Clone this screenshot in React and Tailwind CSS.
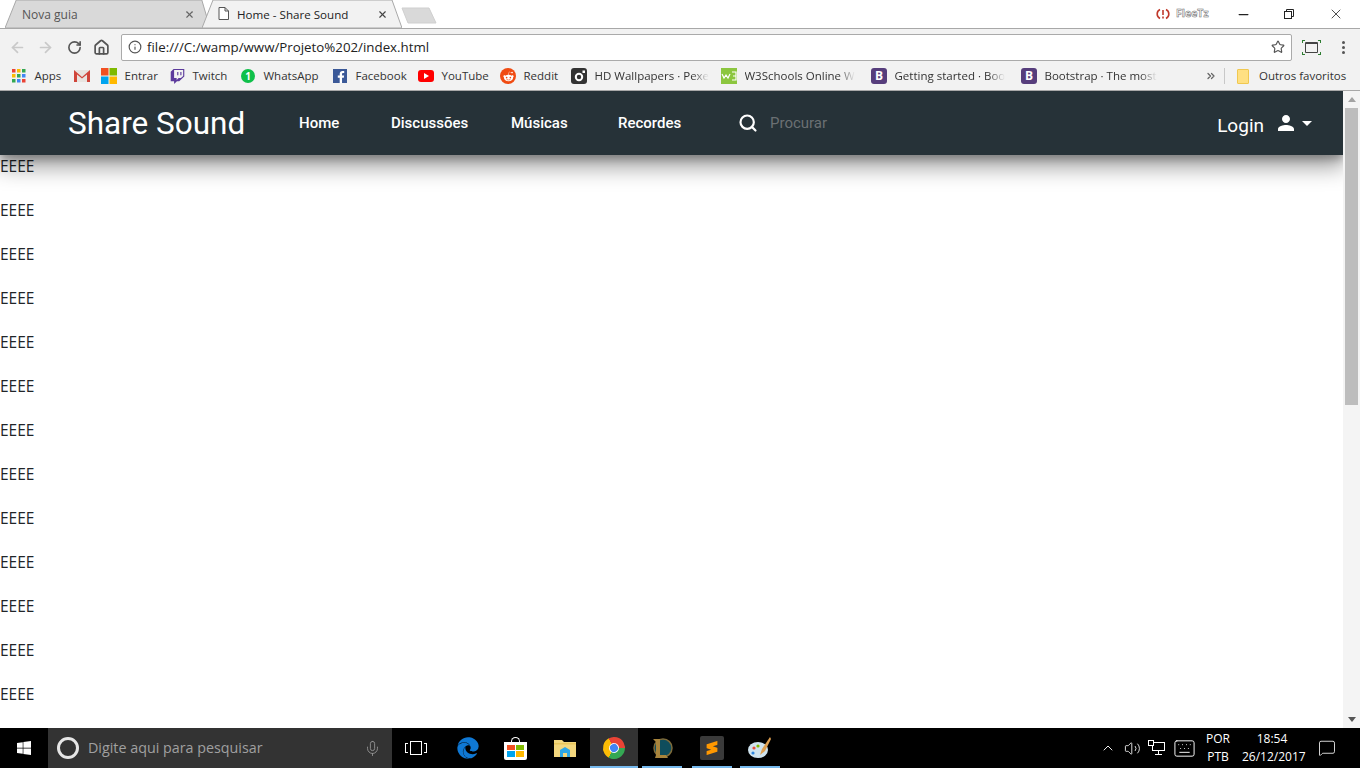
import React from "react";
import { ArrowLeft, ArrowRight, RotateCw, House, Info, Star, X, Minus, ChevronUp, Mic, Keyboard, MessageSquare, Volume2, ChevronsRight, Search } from "lucide-react";
import { FaTwitch, FaFacebookF, FaRedditAlien, FaWindows, FaEdge } from "react-icons/fa";
import { MdPerson, MdArrowDropDown } from "react-icons/md";
import { SiSublimetext } from "react-icons/si";

const chrome = { fontFamily: "'Open Sans', sans-serif" };

const Tab = ({ active, className, children }) => (
  <div className={`relative h-[29px] flex items-center ${className}`}>
    <svg className="absolute inset-0 w-full h-full" viewBox="0 0 100 29" preserveAspectRatio="none">
      <polygon
        points={active ? "0,29 5.5,1 95,1 100,29" : "0,29 5.5,1 96,1 100,29"}
        fill={active ? "#f2f2f2" : "#d9d9d9"}
        stroke="#a8a8a8"
        strokeWidth="1"
        vectorEffect="non-scaling-stroke"
      />
    </svg>
    {children}
  </div>
);

const Grid = () => (
  <svg width="14" height="14" viewBox="0 0 14 14">
    {[0, 5, 10].map((y, r) =>
      [0, 5, 10].map((x, c) => (
        <rect key={`${r}${c}`} x={x} y={y} width="3.5" height="3.5" fill={["#ea4335", "#fbbc05", "#34a853", "#4285f4"][(r + c) % 4]} />
      ))
    )}
  </svg>
);

const Gmail = () => (
  <svg width="16" height="12" viewBox="0 0 16 12">
    <rect width="16" height="12" fill="#e8e4e0" />
    <path d="M0 0 L8 7 L16 0 V12 H13 V4.5 L8 8.5 L3 4.5 V12 H0 Z" fill="#d0453a" />
  </svg>
);

const Ms = () => (
  <svg width="16" height="16" viewBox="0 0 16 16">
    <rect width="7.5" height="7.5" fill="#f25022" />
    <rect x="8.5" width="7.5" height="7.5" fill="#7fba00" />
    <rect y="8.5" width="7.5" height="7.5" fill="#00a4ef" />
    <rect x="8.5" y="8.5" width="7.5" height="7.5" fill="#ffb900" />
  </svg>
);

const Whats = () => (
  <div className="w-[14px] h-[14px] rounded-full bg-[#0fc04a] flex items-center justify-center text-white text-[10px] font-bold leading-none">1</div>
);

const YouTube = () => (
  <svg width="16" height="12" viewBox="0 0 16 12">
    <rect width="16" height="12" rx="3" fill="#f00" />
    <polygon points="6,3 11,6 6,9" fill="#fff" />
  </svg>
);

const Camera = () => (
  <svg width="16" height="16" viewBox="0 0 16 16">
    <rect width="16" height="16" rx="3" fill="#333" />
    <circle cx="8" cy="9" r="3.2" fill="none" stroke="#fff" strokeWidth="2" />
    <rect x="11.5" y="2.5" width="2.5" height="2.5" fill="#fff" />
  </svg>
);

const W3 = () => (
  <svg width="16" height="16" viewBox="0 0 16 16">
    <rect width="16" height="16" fill="#8cc63f" />
    <path d="M1 6 L3 10 L5 7 L7 10 L9 6" fill="none" stroke="#fff" strokeWidth="1.2" />
    <path d="M11 4 H15 V12 H11 M12 8 H15" fill="none" stroke="#fff" strokeWidth="1.2" />
  </svg>
);

const Boot = () => (
  <div className="w-4 h-4 rounded-[3px] bg-[#563d7c] text-white text-[12px] font-bold leading-4 text-center">B</div>
);

const bookmarks = [
  { icon: <Grid />, label: "Apps", w: "w-[63px]" },
  { icon: <Gmail />, label: "", w: "w-[27px]" },
  { icon: <Ms />, label: "Entrar", w: "w-[68px]" },
  { icon: <FaTwitch size={15} color="#5c3a9c" />, label: "Twitch", w: "w-[71px]" },
  { icon: <Whats />, label: "WhatsApp", w: "w-[92px]" },
  { icon: <div className="w-[14px] h-[14px] bg-[#3b5998] flex items-end justify-end overflow-hidden"><FaFacebookF size={12} color="#fff" /></div>, label: "Facebook", w: "w-[86px]" },
  { icon: <YouTube />, label: "YouTube", w: "w-[82px]" },
  { icon: <div className="w-4 h-4 rounded-full bg-[#f04b12] flex items-center justify-center"><FaRedditAlien size={11} color="#fff" /></div>, label: "Reddit", w: "w-[71px]" },
  { icon: <Camera />, label: "HD Wallpapers · Pexe", w: "w-[150px]", fade: true },
  { icon: <W3 />, label: "W3Schools Online W", w: "w-[150px]", fade: true },
  { icon: <Boot />, label: "Getting started · Boo", w: "w-[150px]", fade: true },
  { icon: <Boot />, label: "Bootstrap · The most", w: "w-[150px]", fade: true },
];

const navLinks = [
  { label: "Home", w: "w-[92px]" },
  { label: "Discussões", w: "w-[120px]" },
  { label: "Músicas", w: "w-[107px]" },
  { label: "Recordes", w: "w-[120px]" },
];

const lines = Array.from({ length: 13 });

const TaskApp = ({ className = "", active, running, children }) => (
  <div className={`relative w-12 h-10 flex items-center justify-center ${active ? "bg-[#333333]" : ""} ${className}`}>
    {children}
    {running && <div className={`absolute bottom-0 h-[2px] bg-[#76b9ed] ${active ? "w-12" : "w-10"}`} />}
  </div>
);

export default function App() {
  return (
    <div className="w-[1360px] h-[768px] overflow-hidden flex flex-col bg-white" style={chrome}>
      {/* Tabs */}
      <div className="h-[29px] flex items-end bg-white border-b border-[#a8a8a8] relative shrink-0">
        <Tab className="ml-[5px] w-[205px]">
          <span className="relative ml-[17px] mt-[2px] text-[12px] text-[#555]">Nova guia</span>
          <X className="absolute left-[179px] top-[10px]" size={11} strokeWidth={2.5} color="#666" />
        </Tab>
        <Tab active className="-ml-[8px] w-[200px]">
          <svg className="relative ml-[16px]" width="11" height="13" viewBox="0 0 11 13">
            <path d="M1 .5 H7 L10.5 4 V12.5 H1 Z M7 .5 V4 H10.5" fill="#fff" stroke="#555" />
          </svg>
          <span className="relative ml-[8px] mt-[2px] text-[11.6px] text-[#222]">Home - Share Sound</span>
          <X className="absolute left-[175px] top-[10px]" size={11} strokeWidth={2.5} color="#444" />
        </Tab>
        <svg className="ml-[-1px] mb-[4px]" width="36" height="17" viewBox="0 0 36 17">
          <polygon points="1,1 28,1 35,16 7,16" fill="#d9d9d9" stroke="#cfcfcf" />
        </svg>
        <div className="ml-auto self-start h-7 flex items-center">
          <div className="w-[20px]">
            <svg width="14" height="12" viewBox="0 0 14 12" fill="none" stroke="#c0392b" strokeWidth="1.6">
              <path d="M4 1.5 A5 5 0 0 0 4 10.5" />
              <path d="M10 1.5 A5 5 0 0 1 10 10.5" />
              <path d="M7 2 V7 M7 8.5 V10.5" />
            </svg>
          </div>
          <span className="text-[10.5px] font-bold text-white [-webkit-text-stroke:0.5px_#666] w-[44px]">FleeTz</span>
          <div className="w-[46px] flex justify-center"><Minus size={15} color="#222" /></div>
          <div className="w-[46px] flex justify-center">
            <svg width="10" height="10" viewBox="0 0 10 10" fill="none" stroke="#222"><rect x=".5" y="2.5" width="7" height="7" /><path d="M2.5 2.5 V.5 H9.5 V7.5 H7.5" /></svg>
          </div>
          <div className="w-[47px] flex justify-center"><X size={16} strokeWidth={1.2} color="#222" /></div>
          <div className="w-[1px]" />
        </div>
      </div>

      {/* Toolbar */}
      <div className="h-[33px] pt-[3px] flex items-center bg-[#f2f2f2] shrink-0">
        <div className="w-[26px] flex justify-end"><ArrowLeft size={17} color="#c9c9c9" strokeWidth={2.4} /></div>
        <div className="w-[28px] flex justify-end"><ArrowRight size={17} color="#c9c9c9" strokeWidth={2.4} /></div>
        <div className="w-[28px] flex justify-end"><RotateCw size={15} color="#555" strokeWidth={2.6} /></div>
        <div className="w-[28px] flex justify-end"><House size={17} color="#555" strokeWidth={2.4} /></div>
        <div className="ml-[11px] w-[1171px] h-[27px] flex items-center bg-white border border-[#aaa] rounded-[2px]">
          <Info className="ml-[6px]" size={14} color="#555" strokeWidth={2} />
          <span className="ml-[5px] mt-[1px] text-[13.3px] text-[#222]">file:///C:/wamp/www/Projeto%202/index.html</span>
          <Star className="ml-auto mr-[6px]" size={14} color="#555" strokeWidth={2} />
        </div>
        <div className="ml-[11px] w-[17px] h-[13px] relative flex items-center justify-center">
          <div className="w-[13px] h-[11px] border border-[#444] border-t-2 rounded-[1px]" />
          <div className="absolute -left-[1px] -top-[1px] w-[3px] h-[3px] border-l border-t border-[#2e7d32]" />
          <div className="absolute -right-[1px] -top-[1px] w-[3px] h-[3px] border-r border-t border-[#2e7d32]" />
          <div className="absolute -left-[1px] -bottom-[1px] w-[3px] h-[3px] border-l border-b border-[#2e7d32]" />
          <div className="absolute -right-[1px] -bottom-[1px] w-[3px] h-[3px] border-r border-b border-[#2e7d32]" />
        </div>
        <div className="ml-[22px] flex flex-col gap-[2px]">
          <div className="w-[3px] h-[3px] rounded-full bg-[#555]" />
          <div className="w-[3px] h-[3px] rounded-full bg-[#555]" />
          <div className="w-[3px] h-[3px] rounded-full bg-[#555]" />
        </div>
      </div>

      {/* Bookmarks */}
      <div className="h-[29px] flex items-center bg-[#f2f2f2] border-b border-[#a8a8a8] pl-[11px] shrink-0">
        {bookmarks.map((b, i) => (
          <div key={i} className={`flex items-center shrink-0 ${b.w}`}>
            <div className="w-4 flex justify-center shrink-0">{b.icon}</div>
            {b.label && (
              <span className={`ml-[7.5px] text-[11.5px] text-[#333] whitespace-nowrap ${b.fade ? "[mask-image:linear-gradient(to_right,black_85%,transparent)]" : ""}`}>
                {b.label}
              </span>
            )}
          </div>
        ))}
        <ChevronsRight className="ml-[34px]" size={12} color="#666" strokeWidth={2.5} />
        <div className="ml-[7px] w-px h-[16px] bg-[#c8c8c8]" />
        <div className="ml-[12px] w-[12px] h-[15px] bg-[#ffe082] border border-[#f0c850] rounded-[1px]" />
        <span className="ml-[10px] text-[11.5px] text-[#333] whitespace-nowrap">Outros favoritos</span>
      </div>

      {/* Page */}
      <div className="flex-1 min-h-0 flex overflow-hidden">
        <div className="flex-1 min-w-0 flex flex-col">
          <nav className="relative z-10 h-16 shrink-0 flex items-center bg-[#263238] pl-[68px] pr-[30px] shadow-[0_10px_22px_2px_rgba(0,0,0,0.38),0_4px_8px_rgba(0,0,0,0.25)] text-white [font-family:Roboto,sans-serif]">
            <span className="w-[231px] mt-[1px] text-[31.5px] leading-none">Share Sound</span>
            {navLinks.map((l) => (
              <a key={l.label} className={`${l.w} text-[15px] font-medium`}>{l.label}</a>
            ))}
            <Search size={20} strokeWidth={2.6} />
            <span className="ml-[12px] text-[15px] text-[#6b7073]">Procurar</span>
            <div className="ml-auto flex items-center">
              <span className="text-[19px] mt-[6px]">Login</span>
              <MdPerson size={24} className="ml-[10px]" />
              <MdArrowDropDown size={24} className="-ml-[3px] -mr-[6px]" />
            </div>
          </nav>
          <div className="relative -mt-[1px] flex flex-col gap-5 text-[15.5px] leading-6 text-[#212529]">
            {lines.map((_, i) => (
              <p key={i}>EEEE</p>
            ))}
          </div>
        </div>
        <div className="relative z-20 w-[17px] shrink-0 flex flex-col items-center bg-[#f4f4f4]">
          <svg className="mt-[6px]" width="8" height="5" viewBox="0 0 8 5"><polygon points="4,0 8,5 0,5" fill="#a3a3a3" /></svg>
          <div className="mt-[6px] w-[13px] h-[297px] bg-[#bdbdbd]" />
          <svg className="mt-auto mb-[6px]" width="8" height="5" viewBox="0 0 8 5"><polygon points="0,0 8,0 4,5" fill="#555" /></svg>
        </div>
      </div>

      {/* Taskbar */}
      <div className="h-10 shrink-0 flex items-center bg-black text-white">
        <div className="w-12 flex justify-center"><FaWindows size={16} /></div>
        <div className="w-[344px] h-10 flex items-center bg-[#333333]">
          <div className="ml-[9px] w-[22px] h-[22px] rounded-full border-[3px] border-[#e6e6e6]" />
          <span className="ml-[9px] text-[14.3px] text-[#a0a0a0]">Digite aqui para pesquisar</span>
          <Mic className="ml-auto mr-[11px]" size={17} color="#999" strokeWidth={1.2} />
        </div>
        <TaskApp>
          <div className="w-[12px] h-[14px] border border-white" />
          <div className="w-[3px] h-[10px] border border-l-0 border-white absolute left-[32px]" />
          <div className="w-[3px] h-[10px] border border-r-0 border-white absolute left-[13px]" />
        </TaskApp>
        <TaskApp className="ml-[4px]"><FaEdge size={22} color="#0f78d4" /></TaskApp>
        <TaskApp className="-ml-[1px]">
          <div className="w-[23px] h-[18px] mt-[5px] bg-white rounded-b-[2px] grid grid-cols-2 gap-[1px] p-[3px] relative">
            <div className="absolute -top-[5px] left-[7px] w-[9px] h-[6px] rounded-t-full border border-b-0 border-white" />
            <div className="bg-[#f25022]" />
            <div className="bg-[#7fba00]" />
            <div className="bg-[#00a4ef]" />
            <div className="bg-[#ffb900]" />
          </div>
        </TaskApp>
        <TaskApp className="ml-[2px]">
          <svg width="22" height="18" viewBox="0 0 22 18">
            <path d="M0 1 H8 L10 3 H22 V18 H0 Z" fill="#f3d77e" />
            <rect y="4" width="22" height="1.5" fill="#e9c65c" />
            <polygon points="6,11 11,8 16,11 16,18 13,18 13,14 9,14 9,18 6,18" fill="#2ea7e8" />
          </svg>
        </TaskApp>
        <TaskApp active running className="ml-[1px]">
          <div className="w-[22px] h-[22px] rounded-full bg-[conic-gradient(#ea4335_0_120deg,#34a853_120deg_240deg,#fbbc05_240deg_360deg)] rotate-[-30deg] flex items-center justify-center">
            <div className="w-[10px] h-[10px] rounded-full bg-[#4285f4] border border-white" />
          </div>
        </TaskApp>
        <TaskApp running>
          <svg width="22" height="22" viewBox="0 0 22 22">
            <circle cx="12" cy="11" r="9" fill="#0f4d5c" stroke="#7d6a3a" strokeWidth="1.5" />
            <path d="M2 2 H9 V18 H15 L17 21 H4 L5 18 V5 Z" fill="#a8843c" />
          </svg>
        </TaskApp>
        <TaskApp running className="ml-[2px]">
          <div className="w-6 h-6 rounded-[2px] bg-[#3a3a3a] flex items-center justify-center"><SiSublimetext size={14} color="#ff9800" /></div>
        </TaskApp>
        <TaskApp running>
          <svg width="24" height="24" viewBox="0 0 24 24">
            <ellipse cx="10" cy="14" rx="10" ry="8" fill="#cfe3ee" />
            <circle cx="6" cy="12" r="1.6" fill="#e74c3c" />
            <circle cx="10" cy="10" r="1.6" fill="#7fba00" />
            <circle cx="5" cy="17" r="1.6" fill="#2e86de" />
            <path d="M22 1 L14 13 L12 19 L17 15 L23 3 Z" fill="#e0a050" />
          </svg>
        </TaskApp>

        <div className="ml-auto flex items-center">
          <ChevronUp size={16} strokeWidth={1.4} />
          <Volume2 className="ml-[8px]" size={17} strokeWidth={1.2} />
          <svg className="ml-[7px]" width="17" height="16" viewBox="0 0 17 16" fill="none" stroke="#fff">
            <rect x="4.5" y="2.5" width="12" height="8" />
            <rect x=".5" y=".5" width="5" height="5" fill="#000" />
            <path d="M10.5 10.5 V14 M7 14.5 H14" />
          </svg>
          <Keyboard className="ml-[8px]" size={23} strokeWidth={1} />
          <div className="ml-[10px] w-[24px] text-center text-[12px] leading-[18px]">
            <div>POR</div>
            <div>PTB</div>
          </div>
          <div className="ml-[12px] w-[60px] text-center text-[12px] leading-[18px] whitespace-nowrap">
            <div>18:54</div>
            <div>26/12/2017</div>
          </div>
          <MessageSquare className="ml-[16px] mr-[24px]" size={18} strokeWidth={1.1} />
        </div>
      </div>
    </div>
  );
}
